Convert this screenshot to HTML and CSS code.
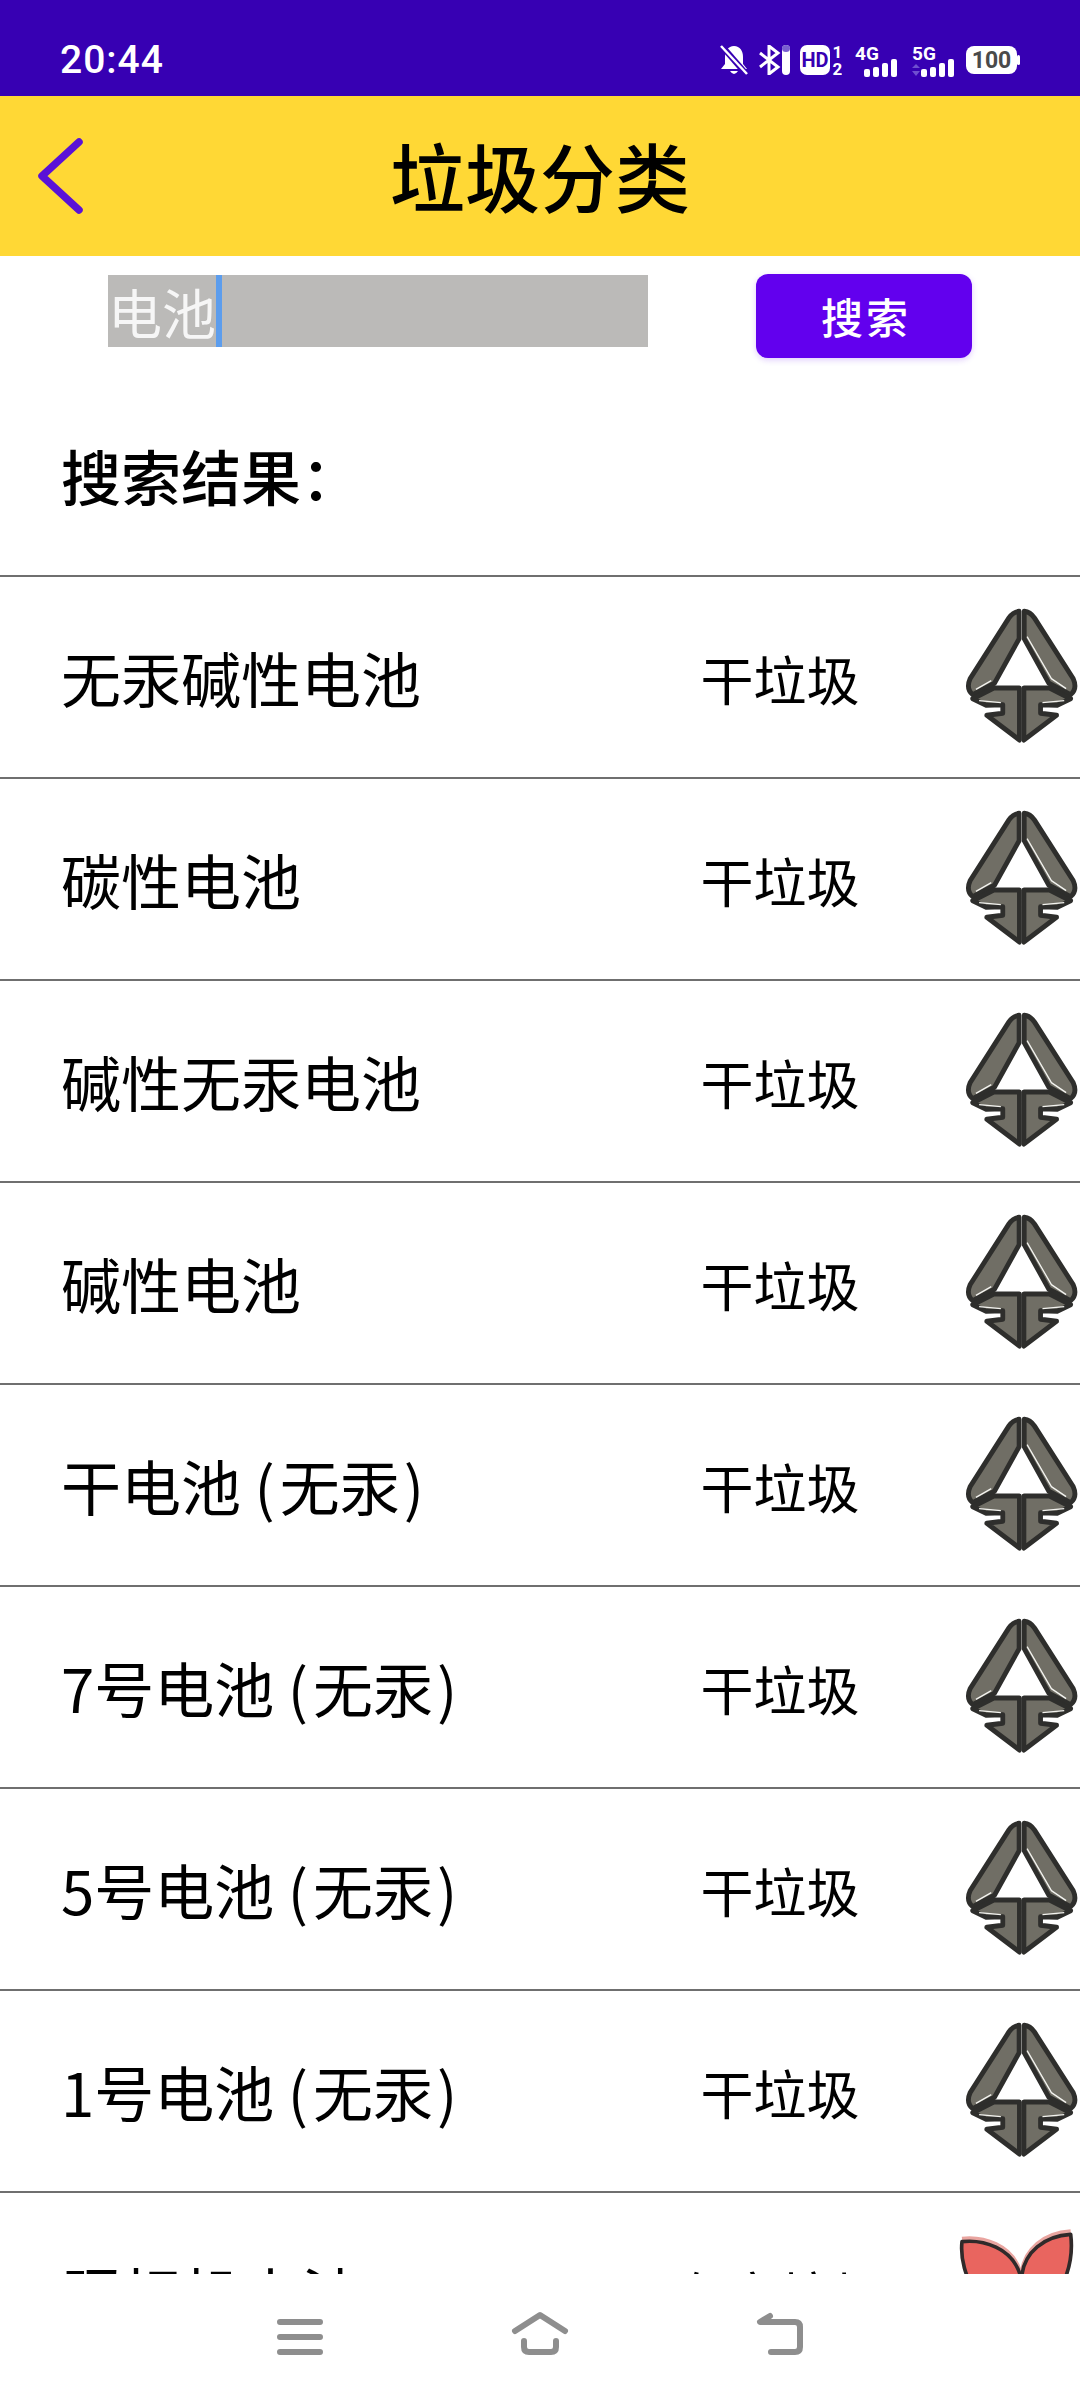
FILE: index.html
```html
<!DOCTYPE html>
<html lang="zh-CN">
<head>
  <meta charset="UTF-8">
  <meta name="viewport" content="width=device-width, initial-scale=1.0">
  <title>垃圾分类</title>
  <link rel="stylesheet" href="styles.css">
</head>
<body>
  <!-- shared list icons -->
  <svg class="defs" width="0" height="0">
    <symbol id="icon-dry" viewBox="0 0 420 480">
      <g transform="translate(245 0) scale(.96 1) translate(-245 0)">
        <g fill="#706e65" stroke="#2e2e2c" stroke-width="15" stroke-linejoin="round">
          <path d="M237 64 L237 146 L160 280 L92 314 Q70 296 84 266 L205 84 Q218 66 237 64 Z"/>
          <path d="M253 64 L253 146 L330 280 L398 314 Q420 296 406 266 L285 84 Q272 66 253 64 Z"/>
          <path d="M238 294 L158 294 L92 326 L134 346 L186 344 L186 370 L136 376 L238 450 Z"/>
          <path d="M252 294 L332 294 L398 326 L356 346 L304 344 L304 370 L354 376 L252 450 Z"/>
        </g>
        <g fill="none" stroke="#f4f4f0" stroke-width="4">
          <path d="M102 298 L150 272"/>
          <path d="M262 140 L338 266 L384 296"/>
          <path d="M112 332 L180 338"/>
          <path d="M378 332 L310 338"/>
        </g>
      </g>
    </symbol>
    <symbol id="icon-hazard" viewBox="0 0 420 480">
      <g fill="none" stroke="#e9a5a0" stroke-width="12" transform="translate(0 -9)">
        <path d="M66 107 C130 100 215 125 240 205"/>
        <path d="M392 85 C310 90 255 140 246 205"/>
      </g>
      <g fill="#e9655f" stroke="#302a2a" stroke-width="11" stroke-linejoin="round">
        <path d="M66 107 C130 100 215 125 240 205 C244 250 240 300 236 340 C130 330 55 210 66 107 Z"/>
        <path d="M392 85 C310 90 255 140 246 205 C240 250 240 300 244 340 C350 320 405 190 392 85 Z"/>
      </g>
    </symbol>
  </svg>

  <!-- Status bar -->
  <div class="status-bar">
    <span class="clock">20:44</span>
    <div class="status-icons">
      <svg width="28" height="30" viewBox="0 0 28 30">
        <path d="M14 1 C8 1 5 6 5 12 L5 19 L1 24 L27 24 L23 19 L23 12 C23 6 20 1 14 1 Z M10 26 H18 Q16 29 14 29 Q12 29 10 26 Z" fill="#fff"/>
        <path d="M1 0 L27 30" stroke="#3700b3" stroke-width="6"/>
        <path d="M1 1 L27 29" stroke="#fff" stroke-width="2.5"/>
      </svg>
      <svg width="32" height="30" viewBox="0 0 32 30">
        <path d="M2 8 L20 22 L11 29 L11 1 L20 8 L2 22" fill="none" stroke="#fff" stroke-width="3"/>
        <rect x="24" y="0" width="8" height="30" rx="4" fill="#fff"/>
        <rect x="24" y="0" width="8" height="7" rx="4" fill="#7a5fd0"/>
      </svg>
      <svg width="42" height="38" viewBox="0 -4 42 38">
        <rect x="0" y="0" width="30" height="30" rx="7" fill="#fff"/>
        <text x="15" y="21.5" class="st-hd-label">HD</text>
        <text x="37.5" y="13" class="st-small">1</text>
        <text x="37.5" y="30" class="st-small">2</text>
      </svg>
      <svg class="st-signal" width="44" height="34" viewBox="0 -4 44 34">
        <text x="0" y="13" class="st-net">4G</text>
        <rect x="9" y="22" width="6" height="8" rx="2" fill="#fff"/>
        <rect x="18" y="20" width="6" height="10" rx="2" fill="#fff"/>
        <rect x="27" y="16" width="6" height="14" rx="2" fill="#fff"/>
        <rect x="36" y="12" width="6" height="18" rx="2" fill="#fff"/>
      </svg>
      <svg class="st-signal" width="44" height="34" viewBox="0 -4 44 34">
        <text x="0" y="13" class="st-net">5G</text>
        <path d="M4 17 L8 21 H0 Z M0 24 H8 L4 29 Z" fill="#6f4fd0"/>
        <rect x="9" y="22" width="6" height="8" rx="2" fill="#fff"/>
        <rect x="18" y="20" width="6" height="10" rx="2" fill="#fff"/>
        <rect x="27" y="16" width="6" height="14" rx="2" fill="#fff"/>
        <rect x="36" y="12" width="6" height="18" rx="2" fill="#fff"/>
      </svg>
      <svg width="54" height="28" viewBox="0 0 54 28">
        <rect x="0" y="0" width="51" height="28" rx="8" fill="#fff"/>
        <rect x="51" y="9" width="3" height="10" rx="1.5" fill="#fff"/>
        <text x="25.5" y="21.5" class="st-bat-label">100</text>
      </svg>
    </div>
  </div>

  <!-- Title bar -->
  <div class="title-bar">
    <svg class="back" width="52" height="82" viewBox="0 0 52 82">
      <path d="M45 7 L8 41 L45 75" fill="none" stroke="#5a12d6" stroke-width="7.5" stroke-linecap="round" stroke-linejoin="round"/>
    </svg>
    <h1>垃圾分类</h1>
  </div>

  <div class="content">
    <div class="search-row">
      <div class="search-input">电池<span class="caret"></span></div>
      <button class="search-btn">搜索</button>
    </div>

    <div class="result-title">搜索结果：</div>

    <div class="row">
      <span class="name">无汞碱性电池</span>
      <span class="kind">干垃圾</span>
      <svg class="kind-icon"><use href="#icon-dry"/></svg>
    </div>
    <div class="row">
      <span class="name">碳性电池</span>
      <span class="kind">干垃圾</span>
      <svg class="kind-icon"><use href="#icon-dry"/></svg>
    </div>
    <div class="row">
      <span class="name">碱性无汞电池</span>
      <span class="kind">干垃圾</span>
      <svg class="kind-icon"><use href="#icon-dry"/></svg>
    </div>
    <div class="row">
      <span class="name">碱性电池</span>
      <span class="kind">干垃圾</span>
      <svg class="kind-icon"><use href="#icon-dry"/></svg>
    </div>
    <div class="row">
      <span class="name">干电池 <span class="open">(</span>无汞<span class="close">)</span></span>
      <span class="kind">干垃圾</span>
      <svg class="kind-icon"><use href="#icon-dry"/></svg>
    </div>
    <div class="row">
      <span class="name">7号电池 <span class="open">(</span>无汞<span class="close">)</span></span>
      <span class="kind">干垃圾</span>
      <svg class="kind-icon"><use href="#icon-dry"/></svg>
    </div>
    <div class="row">
      <span class="name">5号电池 <span class="open">(</span>无汞<span class="close">)</span></span>
      <span class="kind">干垃圾</span>
      <svg class="kind-icon"><use href="#icon-dry"/></svg>
    </div>
    <div class="row">
      <span class="name">1号电池 <span class="open">(</span>无汞<span class="close">)</span></span>
      <span class="kind">干垃圾</span>
      <svg class="kind-icon"><use href="#icon-dry"/></svg>
    </div>
    <div class="row">
      <span class="name">照相机电池</span>
      <span class="kind">有害垃圾</span>
      <svg class="kind-icon"><use href="#icon-hazard"/></svg>
    </div>
  </div>

  <!-- Navigation bar -->
  <div class="nav-bar">
    <svg width="60" height="60" viewBox="0 0 60 60">
      <path d="M10 15 H50 M10 30 H50 M10 45 H50" class="nav-stroke"/>
    </svg>
    <svg width="60" height="60" viewBox="0 0 60 60">
      <path d="M5 24 L30 8 L55 24 M14 34 V40 Q14 45 19 45 H41 Q46 45 46 40 V34" class="nav-stroke"/>
    </svg>
    <svg width="60" height="60" viewBox="0 0 60 60">
      <path d="M20 9 L10 15 H45 Q50 15 50 20 V40 Q50 45 45 45 H21" class="nav-stroke"/>
    </svg>
  </div>
</body>
</html>
```

FILE: styles.css
```css
body {
  margin: 0;
  width: 1080px;
  height: 2400px;
  overflow: hidden;
  background-color: #fff;
  color: #000;
  font-family: "Noto Sans CJK SC", "Noto Sans", sans-serif;
}
.defs {
  position: absolute;
}

/* status bar */
.status-bar {
  height: 72px;
  padding: 24px 60px 0 60px;
  display: flex;
  justify-content: space-between;
  align-items: center;
  background-color: #3700b3;
  color: #fff;
}
.clock {
  font-family: Roboto, sans-serif;
  font-size: 39px;
  font-weight: 500;
  letter-spacing: 1px;
}
.status-icons {
  display: flex;
  align-items: center;
  gap: 10px;
}
.status-icons text {
  font-family: Roboto, sans-serif;
  font-weight: 700;
}
.st-hd-label {
  font-size: 20px;
  fill: #3700b3;
  text-anchor: middle;
}
.st-small {
  font-size: 17px;
  fill: #fff;
  text-anchor: middle;
}
.st-net {
  font-size: 19px;
  fill: #fff;
}
.st-bat-label {
  font-size: 23px;
  fill: #4a4a4a;
  text-anchor: middle;
}
.st-signal {
  margin-left: 3px;
}

/* title bar */
.title-bar {
  height: 156px;
  padding-bottom: 4px;
  display: grid;
  grid-template-columns: 120px 1fr 120px;
  align-items: center;
  background-color: #ffd835;
}
.back {
  margin: 4px 0 0 34px;
}
h1 {
  margin: 0;
  text-align: center;
  font-size: 75px;
  font-weight: 500;
}

/* list area */
.content {
  height: 2018px;
  overflow: hidden;
}
.search-row {
  padding: 18px 0 0 108px;
  display: flex;
  align-items: flex-start;
  gap: 108px;
}
.search-input {
  width: 540px;
  height: 72px;
  margin-top: 1px;
  display: flex;
  align-items: center;
  background-color: #bbbab8;
  color: #f6f6f6;
  font-size: 54px;
}
.caret {
  width: 6px;
  height: 72px;
  background-color: #5c9ded;
}
.search-btn {
  width: 216px;
  height: 84px;
  padding: 0 0 2px 4px;
  border: none;
  border-radius: 12px;
  background-color: #6200ee;
  color: #fff;
  font-family: inherit;
  font-size: 42px;
  font-weight: 500;
  letter-spacing: 3px;
  box-shadow: 0 2px 6px rgba(98, 0, 238, 0.2);
}
.result-title {
  height: 84px;
  margin: 75px 0 58px;
  padding-left: 61px;
  font-size: 60px;
  font-weight: 500;
  line-height: 84px;
}
.row {
  height: 200px;
  padding-left: 61px;
  display: grid;
  grid-template-columns: 611px 216px 192px;
  align-items: center;
  border-top: 2px solid #6f6f6f;
}
.name {
  margin-bottom: 2px;
  font-size: 60px;
}
.open {
  margin-right: 5px;
}
.close {
  margin-left: 4px;
}
.kind {
  margin-top: 2px;
  text-align: center;
  font-size: 53px;
}
.kind-icon {
  width: 140px;
  height: 160px;
  margin-bottom: 14px;
  justify-self: end;
}

/* navigation bar */
.nav-bar {
  padding-top: 33px;
  display: flex;
  justify-content: center;
  gap: 180px;
}
.nav-stroke {
  fill: none;
  stroke: #8e8e8e;
  stroke-width: 6;
  stroke-linecap: round;
  stroke-linejoin: round;
}
```
